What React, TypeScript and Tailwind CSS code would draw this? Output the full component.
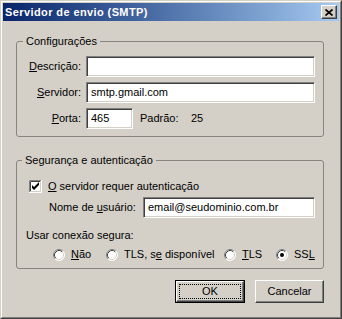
const raised =
  'border border-t-white border-l-white border-r-[#404040] border-b-[#404040] shadow-[inset_-1px_-1px_0_#808080]';
const sunken =
  'border border-t-[#808080] border-l-[#808080] border-r-white border-b-white shadow-[inset_1px_1px_0_#404040,inset_-1px_-1px_0_#d4d0c8] bg-white';

const TextBox = ({ value, width }: { value?: string; width: string }) => (
  <div className={`${sunken} ${width} h-[21px] flex items-center pl-[4px]`}>{value}</div>
);

const CheckBox = () => (
  <svg width="13" height="13" viewBox="0 0 13 13" className="shrink-0">
    <rect x="0" y="0" width="13" height="13" fill="#fff" />
    <path d="M0.5 12 V0.5 H12" stroke="#808080" fill="none" />
    <path d="M1.5 11 V1.5 H11" stroke="#404040" fill="none" />
    <path d="M0 12.5 H12.5 V0" stroke="#fff" fill="none" />
    <path d="M1 11.5 H11.5 V1" stroke="#d4d0c8" fill="none" />
    <polygon points="3,5 5,7 10,2 10,5 5,10 3,8" fill="#000" />
  </svg>
);

const Radio = ({ checked }: { checked?: boolean }) => (
  <svg width="12" height="12" viewBox="0 0 12 12" className="shrink-0">
    <circle cx="6" cy="6" r="5.5" fill="#fff" />
    <path d="M2.11 9.89 A5.5 5.5 0 0 1 9.89 2.11" stroke="#808080" fill="none" />
    <path d="M9.89 2.11 A5.5 5.5 0 0 1 2.11 9.89" stroke="#fff" fill="none" />
    <path d="M2.82 9.18 A4.5 4.5 0 0 1 9.18 2.82" stroke="#404040" fill="none" />
    <path d="M9.18 2.82 A4.5 4.5 0 0 1 2.82 9.18" stroke="#d4d0c8" fill="none" />
    {checked && <circle cx="6" cy="6" r="2" fill="#000" />}
  </svg>
);

export default function App() {
  return (
    <div className="w-[342px] h-[319px] bg-[#d4d0c8] font-['Liberation_Sans',Arial,sans-serif] text-[11px] leading-[13px] text-black border border-t-[#d4d0c8] border-l-[#d4d0c8] border-r-[#404040] border-b-[#404040]">
      <div className="h-full border border-t-white border-l-white border-r-[#808080] border-b-[#808080] p-px">
        {/* title bar */}
        <div className="h-[18px] flex items-center justify-between bg-linear-to-r from-[#0a246a] to-[#a6caf0] pl-[2px] pr-[2px]">
          <span className="text-white font-bold tracking-[0.4px]">Servidor de envio (SMTP)</span>
          <div className={`${raised} bg-[#d4d0c8] w-[16px] h-[14px] flex items-center justify-center`}>
            <svg width="8" height="7" viewBox="0 0 8 7">
              <path d="M0.5 0.5 L7.5 6.5 M7.5 0.5 L0.5 6.5" stroke="#000" strokeWidth="1.7" />
            </svg>
          </div>
        </div>

        <fieldset className="mt-[14px] ml-[13px] w-[308px] border border-[#878580] rounded-[3px] px-0 pt-[8px] pb-[7px]">
          <legend className="ml-[6px] px-[3px] leading-[13px]">Configurações</legend>
          <div className="flex flex-col gap-[5px]">
            <div className="flex items-center">
              <span className="w-[64px] text-right">
                <span className="underline">D</span>escrição:
              </span>
              <div className="ml-[5px]">
                <TextBox width="w-[229px]" />
              </div>
            </div>
            <div className="flex items-center">
              <span className="w-[64px] text-right">
                <span className="underline">S</span>ervidor:
              </span>
              <div className="ml-[5px]">
                <TextBox width="w-[229px]" value="smtp.gmail.com" />
              </div>
            </div>
            <div className="flex items-center">
              <span className="w-[64px] text-right">
                <span className="underline">P</span>orta:
              </span>
              <div className="ml-[5px]">
                <TextBox width="w-[47px]" value="465" />
              </div>
              <span className="ml-[7px] w-[51px]">Padrão:</span>
              <span>25</span>
            </div>
          </div>
        </fieldset>

        <fieldset className="mt-[17px] ml-[13px] w-[308px] border border-[#878580] rounded-[3px] px-0 pt-[13px] pb-[7px]">
          <legend className="ml-[5px] px-[3px] leading-[13px]">Segurança e autenticação</legend>
          <div className="flex items-center gap-[6px] pl-[12px] h-[13px]">
            <CheckBox />
            <span>
              <span className="underline">O</span> servidor requer autenticação
            </span>
          </div>
          <div className="mt-[4px] flex items-center pl-[32px] pr-[8px]">
            <span className="flex-1">
              Nome de <span className="underline">u</span>suário:
            </span>
            <TextBox width="w-[172px]" value="email@seudominio.com.br" />
          </div>
          <div className="mt-[11px] pl-[9px]">Usar conexão segura:</div>
          <div className="mt-[6px] pl-[36px] flex items-center h-[13px]">
            <div className="w-[53px] flex items-center gap-[6px]">
              <Radio />
              <span>
                <span className="underline">N</span>ão
              </span>
            </div>
            <div className="w-[118px] flex items-center gap-[6px]">
              <Radio />
              <span>
                TLS, s<span className="underline">e</span> disponível
              </span>
            </div>
            <div className="w-[52px] flex items-center gap-[6px]">
              <Radio />
              <span>
                <span className="underline">T</span>LS
              </span>
            </div>
            <div className="flex items-center gap-[6px]">
              <Radio checked />
              <span>
                SS<span className="underline">L</span>
              </span>
            </div>
          </div>
        </fieldset>

        <div className="mt-[11px] flex justify-end gap-[10px] pr-[15px]">
          <div className="w-[70px] h-[23px] border border-black">
            <div className={`${raised} h-full p-[2px]`}>
              <div className="h-full border border-dotted border-black flex items-center justify-center">OK</div>
            </div>
          </div>
          <div className={`${raised} w-[69px] h-[23px] flex items-center justify-center`}>Cancelar</div>
        </div>
      </div>
    </div>
  );
}
